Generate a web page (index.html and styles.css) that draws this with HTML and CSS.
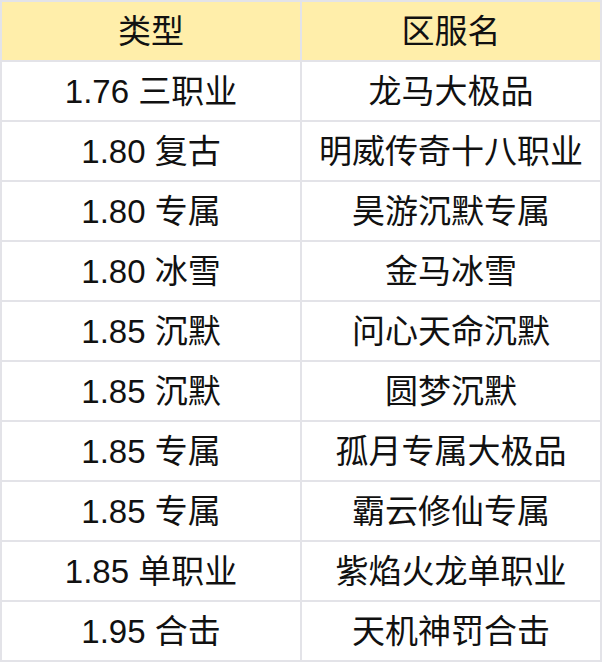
FILE: index.html
```html
<!DOCTYPE html>
<html lang="zh">
<head>
<meta charset="utf-8">
<link rel="stylesheet" href="styles.css">
</head>
<body>
<table class="tbl">
  <thead>
    <tr><th>类型</th><th>区服名</th></tr>
  </thead>
  <tbody>
    <tr><td>1.76 三职业</td><td>龙马大极品</td></tr>
    <tr><td>1.80 复古</td><td>明威传奇十八职业</td></tr>
    <tr><td>1.80 专属</td><td>昊游沉默专属</td></tr>
    <tr><td>1.80 冰雪</td><td>金马冰雪</td></tr>
    <tr><td>1.85 沉默</td><td>问心天命沉默</td></tr>
    <tr><td>1.85 沉默</td><td>圆梦沉默</td></tr>
    <tr><td>1.85 专属</td><td>孤月专属大极品</td></tr>
    <tr><td>1.85 专属</td><td>霸云修仙专属</td></tr>
    <tr><td>1.85 单职业</td><td>紫焰火龙单职业</td></tr>
    <tr><td>1.95 合击</td><td>天机神罚合击</td></tr>
  </tbody>
</table>
</body>
</html>
```
FILE: styles.css
```css
html, body {
  margin: 0;
  padding: 0;
  background: #ffffff;
}
.tbl {
  border-collapse: collapse;
  width: 602px;
  table-layout: fixed;
  font-family: "Liberation Sans", "Noto Sans CJK SC", sans-serif;
  font-size: 33px;
  color: #111111;
}
.tbl th, .tbl td {
  border: 2px solid #e3e3e8;
  height: 58px;
  padding: 0;
  text-align: center;
  vertical-align: middle;
  font-weight: normal;
  line-height: 1;
}
.tbl th {
  background: #ffeeaa;
}
```
